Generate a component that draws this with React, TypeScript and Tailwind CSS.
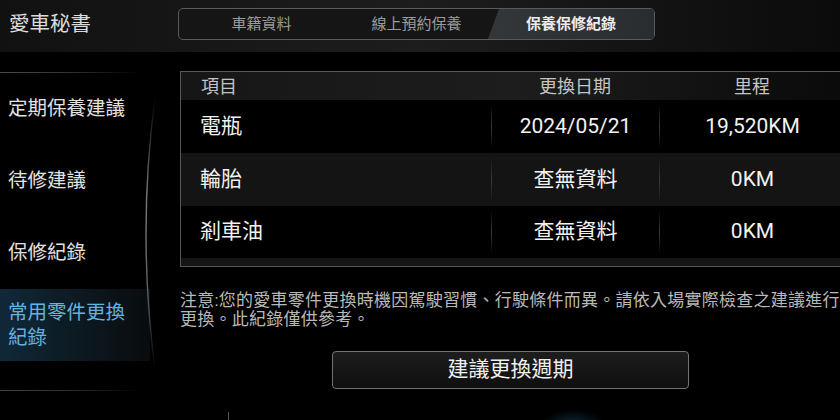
import React from "react"

const tabs = [
  { label: "車籍資料", w: "w-[165px]" },
  { label: "線上預約保養", w: "w-[145px]" },
]

const sideItems = ["定期保養建議", "待修建議", "保修紀錄"]

const rows = [
  { name: "電瓶", date: "2024/05/21", km: "19,520KM", bg: "bg-black", h: "h-[53px]" },
  { name: "輪胎", date: "查無資料", km: "0KM", bg: "bg-[#141414]", h: "h-[53px]" },
  { name: "剎車油", date: "查無資料", km: "0KM", bg: "bg-black", h: "h-[52px]" },
]

function Divider() {
  return <div className="w-px h-[44px] bg-gradient-to-b from-transparent via-[#3c3c3c] to-transparent" />
}

export default function App() {
  return (
    <div
      className="relative w-[840px] h-[420px] overflow-hidden bg-black text-[#e6e6e6]"
      style={{ fontFamily: "Roboto, 'Noto Sans CJK TC', sans-serif" }}
    >
      {/* Top bar */}
      <div className="h-[52px] bg-gradient-to-r from-[#111111] via-[#1d1d1d] to-[#0b0b0b]">
        <div className="h-[48px] flex items-center">
          <div className="w-[178px] pl-[9px] text-[20.5px] leading-none text-[#dcdcdc]">愛車秘書</div>
          <div className="flex h-[32px] w-[477px] rounded-[5px] border border-[#5a5a5a] overflow-hidden bg-[#151515]">
            {tabs.map((t) => (
              <div key={t.label} className={`${t.w} flex items-center justify-center text-[15px] text-[#9c9c9c]`}>
                {t.label}
              </div>
            ))}
            <div className="flex-1 -ml-[1px] flex items-center justify-center text-[15px] font-bold text-[#ececec] bg-gradient-to-r from-[#33373a] to-[#2a2d30] [clip-path:polygon(11px_0,100%_0,100%_100%,0_100%)]">
              保養保修紀錄
            </div>
          </div>
        </div>
      </div>

      <div className="flex">
        {/* Sidebar */}
        <div className="w-[180px] shrink-0 pt-[20px]">
          <div className="h-px w-[140px] bg-gradient-to-r from-[#4a4a4a] via-[#333] to-transparent" />
          {sideItems.map((s) => (
            <div key={s} className="h-[72px] flex items-center pl-[8px] text-[19.5px] text-[#e2e2e2]">
              {s}
            </div>
          ))}
          <div className="h-[72px] w-[150px] flex items-center pl-[8px] bg-gradient-to-r from-[#10293a] via-[#0c1a22] to-[#090c0e]">
            <div className="text-[19.5px] leading-[25px] text-[#63b3de]">
              常用零件更換
              <br />
              紀錄
            </div>
          </div>
          <div className="mt-[29px] h-px w-[140px] bg-gradient-to-r from-[#444] via-[#2e2e2e] to-transparent" />
        </div>

        {/* Content */}
        <div className="flex-1 pt-[19px]">
          <div className="w-[665px] border-t border-l border-b border-[#575757]">
            <div className="h-[28px] flex items-center text-[18px] text-[#c4c4c4] bg-gradient-to-r from-[#161616] via-[#1d1d1d] to-[#0a0a0a]">
              <div className="w-[310px] pl-[20px]">項目</div>
              <div className="w-[168px] text-center">更換日期</div>
              <div className="flex-1 text-center">里程</div>
            </div>
            {rows.map((r) => (
              <div key={r.name} className={`${r.h} ${r.bg} flex items-center text-[21px] text-[#f2f2f2]`}>
                <div className="w-[310px] pl-[19px]">{r.name}</div>
                <Divider />
                <div className="w-[167px] text-center">{r.date}</div>
                <Divider />
                <div className="flex-1 text-center">{r.km}</div>
              </div>
            ))}
            <div className="h-[8px] bg-[#151515]" />
          </div>

          <p className="mt-[24px] whitespace-nowrap text-[17px] leading-[19px] tracking-[0.25px] text-[#b9b9b9]">
            注意:您的愛車零件更換時機因駕駛習慣、行駛條件而異。請依入場實際檢查之建議進行
            <br />
            更換。此紀錄僅供參考。
          </p>

          <div className="mt-[22px] ml-[152px] w-[357px] h-[38px] rounded-[4px] border border-[#737373] bg-gradient-to-b from-[#1d1d1d] to-[#0f0f0f] flex items-center justify-center text-[21px] text-[#f0f0f0]">
            建議更換週期
          </div>
        </div>
      </div>

      {/* Curved divider */}
      <svg className="absolute left-[130px] top-[90px]" width="40" height="290" viewBox="0 0 40 290">
        <defs>
          <linearGradient id="curve" x1="0" y1="0" x2="0" y2="1">
            <stop offset="0" stopColor="#777" stopOpacity="0" />
            <stop offset="0.35" stopColor="#8a8a8a" stopOpacity="0.9" />
            <stop offset="0.7" stopColor="#7a7a7a" stopOpacity="0.8" />
            <stop offset="1" stopColor="#777" stopOpacity="0" />
          </linearGradient>
        </defs>
        <path d="M25 8 Q7 143 25 279" fill="none" stroke="url(#curve)" strokeWidth="1.4" />
      </svg>

      {/* Bottom decorations */}
      <div className="absolute left-[228px] top-[412px] w-px h-[8px] bg-[#555]" />
      <div className="absolute left-[542px] top-[410px] w-[62px] h-[24px] rounded-full bg-[radial-gradient(ellipse_at_center,rgba(40,120,160,0.28),transparent_70%)]" />
    </div>
  )
}
